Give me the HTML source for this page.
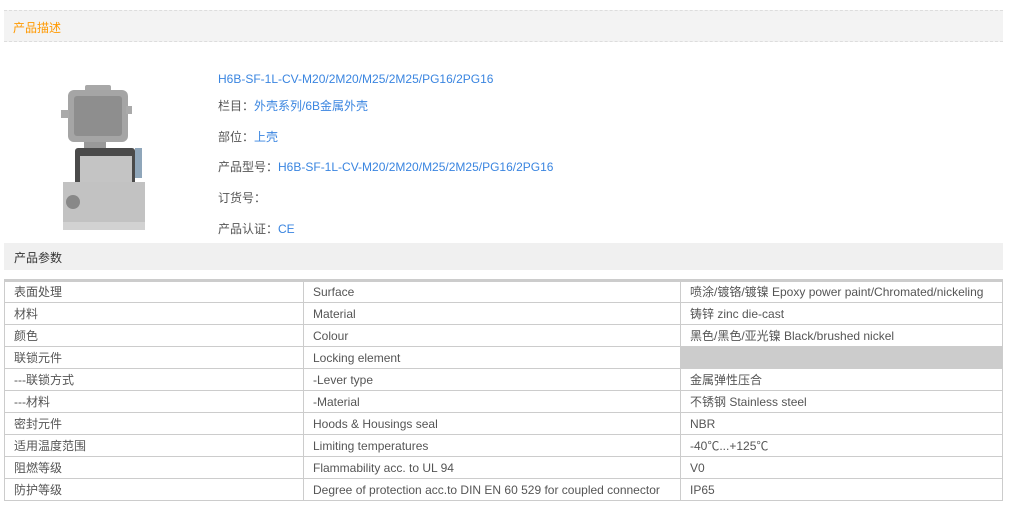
<!DOCTYPE html>
<html><head><meta charset="utf-8"><style>
*{margin:0;padding:0;box-sizing:border-box}
body{width:1011px;height:515px;background:#fff;font-family:"Liberation Sans","Noto Sans CJK SC",sans-serif;font-size:12px;color:#555;position:relative;overflow:hidden}
.h1{position:absolute;left:4px;top:10px;width:999px;height:32px;background:#f3f3f3;border-top:1px dashed #ddd;border-bottom:1px dashed #ddd;color:#f90;padding:8px 0 0 9px}
.info{position:absolute;left:218px;color:#555}
.info a{color:#3a85e0;text-decoration:none}
.h2{position:absolute;left:4px;top:243px;width:999px;height:27px;background:#f0f0f0;color:#333;padding:6px 0 0 10px}
table{position:absolute;left:4px;top:279px;width:999px;border-collapse:collapse;border-top:3px solid #ccc}
td{border:1px solid #ccc;height:22px;padding:0 9px;color:#555;white-space:nowrap;line-height:20px}
</style></head><body>
<div class="h1">产品描述</div>
<svg style="position:absolute;left:55px;top:80px" width="112" height="158" viewBox="0 0 112 158">
<rect x="30" y="5" width="26" height="8" rx="2" fill="#a8a8a8"/>
<rect x="13" y="10" width="60" height="52" rx="6" fill="#a5a5a5"/>
<rect x="19" y="16" width="48" height="40" rx="3" fill="#8e8e8e"/>
<rect x="6" y="30" width="8" height="8" fill="#aaa"/>
<rect x="71" y="26" width="6" height="8" fill="#aaa"/>
<rect x="29" y="62" width="22" height="12" fill="#999"/>
<rect x="20" y="68" width="60" height="40" rx="3" fill="#4a4a4a"/>
<rect x="25" y="76" width="52" height="28" fill="#c4c4c4"/>
<rect x="80" y="68" width="7" height="30" fill="#8fa6ba"/>
<rect x="8" y="102" width="82" height="46" fill="#c2c2c2"/>
<circle cx="18" cy="122" r="7" fill="#888"/>
<rect x="8" y="142" width="82" height="8" fill="#d2d2d2"/>
</svg>
<div class="info" style="top:72px"><a>H6B-SF-1L-CV-M20/2M20/M25/2M25/PG16/2PG16</a></div>
<div class="info" style="top:97px">栏目：<a>外壳系列/6B金属外壳</a></div>
<div class="info" style="top:128px">部位：<a>上壳</a></div>
<div class="info" style="top:158px">产品型号：<a>H6B-SF-1L-CV-M20/2M20/M25/2M25/PG16/2PG16</a></div>
<div class="info" style="top:189px">订货号：</div>
<div class="info" style="top:220px">产品认证：<a>CE</a></div>
<div class="h2">产品参数</div>
<table>
<colgroup><col style="width:299px"><col style="width:377px"><col></colgroup>
<tr><td>表面处理</td><td>Surface</td><td>喷涂/镀铬/镀镍 Epoxy power paint/Chromated/nickeling</td></tr>
<tr><td>材料</td><td>Material</td><td>铸锌 zinc die-cast</td></tr>
<tr><td>颜色</td><td>Colour</td><td>黑色/黑色/亚光镍 Black/brushed nickel</td></tr>
<tr><td>联锁元件</td><td>Locking element</td><td style="background:#ccc"></td></tr>
<tr><td>---联锁方式</td><td>-Lever type</td><td>金属弹性压合</td></tr>
<tr><td>---材料</td><td>-Material</td><td>不锈钢 Stainless steel</td></tr>
<tr><td>密封元件</td><td>Hoods &amp; Housings seal</td><td>NBR</td></tr>
<tr><td>适用温度范围</td><td>Limiting temperatures</td><td>-40℃...+125℃</td></tr>
<tr><td>阻燃等级</td><td>Flammability acc. to UL 94</td><td>V0</td></tr>
<tr><td>防护等级</td><td>Degree of protection acc.to DIN EN 60 529 for coupled connector</td><td>IP65</td></tr>
</table>
</body></html>
